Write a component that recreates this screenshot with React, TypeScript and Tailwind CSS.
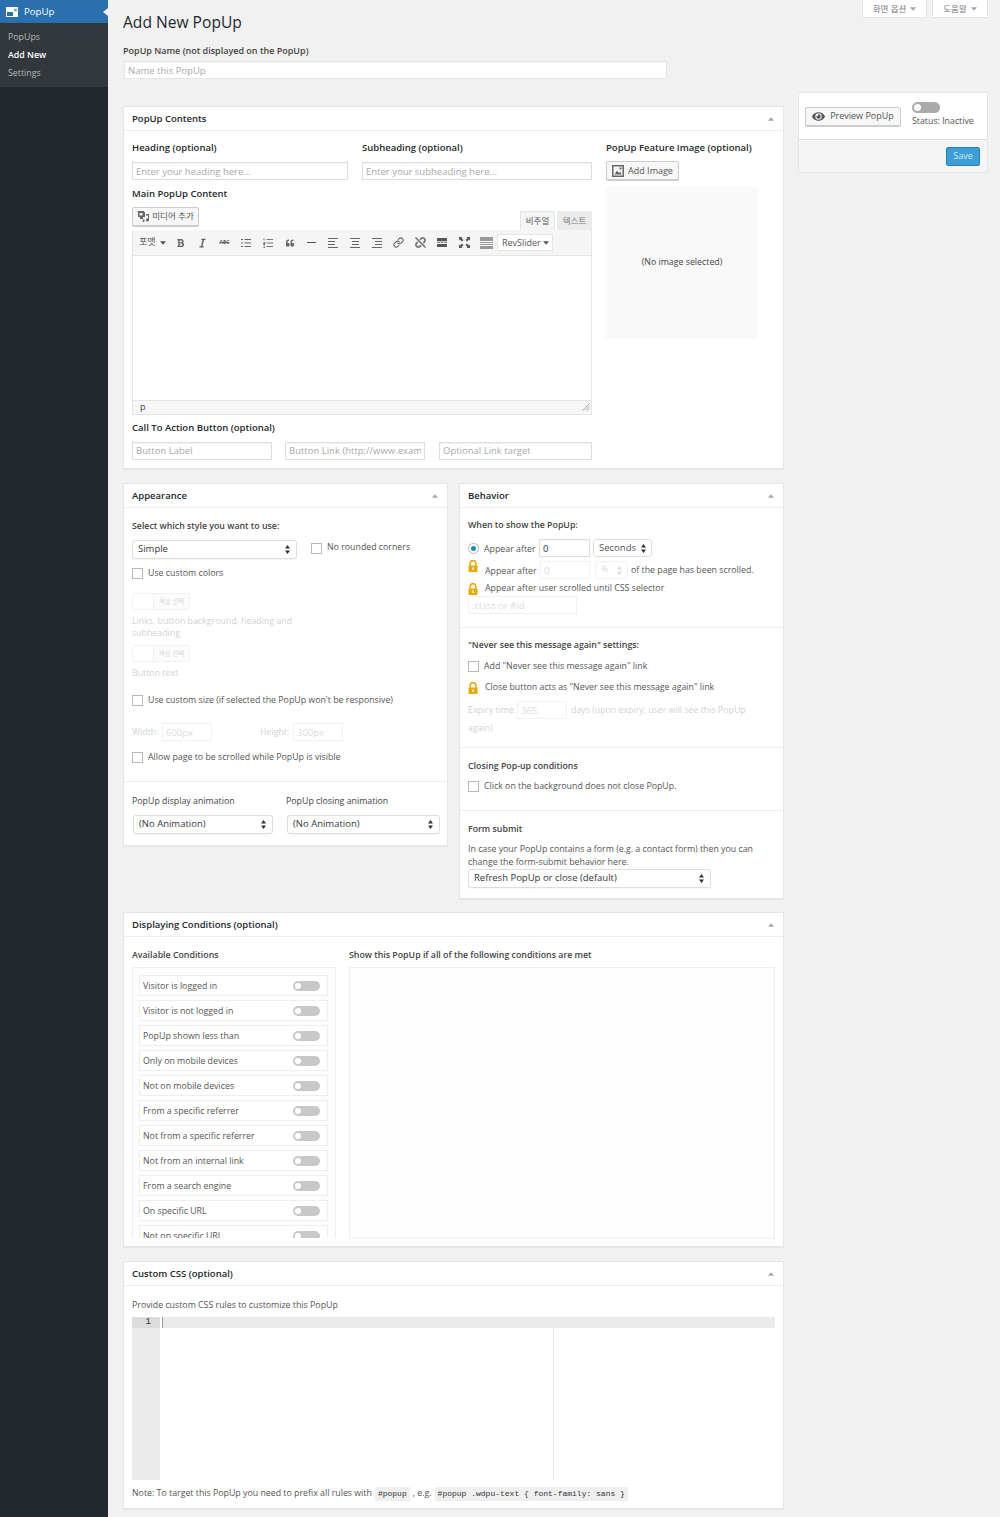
//App.tsx
import { ReactNode } from 'react';
import { FaBold, FaItalic, FaQuoteLeft, FaEye, FaUnlink } from 'react-icons/fa';
import { Link } from 'lucide-react';

const conditions = [
	'Visitor is logged in',
	'Visitor is not logged in',
	'PopUp shown less than',
	'Only on mobile devices',
	'Not on mobile devices',
	'From a specific referrer',
	'Not from a specific referrer',
	'Not from an internal link',
	'From a search engine',
	'On specific URL',
	'Not on specific URL',
];

// Small triangle used on the collapse handles and dropdowns
function Caret({ up = false, className = 'fill-[#72777c]' }: { up?: boolean; className?: string }) {
	return (
		<svg width="6" height="4" viewBox="0 0 7 4" className={className}>
			<path d={up ? 'M3.5 0L7 4H0z' : 'M0 0h7L3.5 4z'} />
		</svg>
	);
}

// Up and down arrows of a native select
function SelectArrows({ className = 'fill-[#333]' }: { className?: string }) {
	return (
		<svg width="5" height="9" viewBox="0 0 5 9" className={className}>
			<path d="M2.5 0L5 3.5H0zM2.5 9L0 5.5h5z" />
		</svg>
	);
}

function Panel({ title, className, children }: { title: string; className: string; children: ReactNode }) {
	return (
		<section className={`bg-white border border-[#e5e5e5] shadow-[0_1px_1px_rgba(0,0,0,0.04)] ${className}`}>
			<div className="h-[24px] px-[8px] flex items-center justify-between border-b border-[#eee]">
				<h2 className="pt-[1px] text-[9.5px] font-semibold text-[#23282d]">{title}</h2>
				<span className="mr-[1px]"><Caret up className="fill-[#a0a5aa]" /></span>
			</div>
			{children}
		</section>
	);
}

function TextInput({ placeholder, value, className }: { placeholder?: string; value?: string; className: string }) {
	return (
		<input
			readOnly
			placeholder={placeholder}
			value={value}
			className={`h-[18px] px-[3px] bg-white border border-[#ddd] text-[9.5px] text-[#32373c] placeholder:text-[#a9a9a9] outline-none shadow-[inset_0_1px_1px_rgba(0,0,0,0.04)] ${className}`}
		/>
	);
}

function FadedInput({ placeholder, className }: { placeholder: string; className: string }) {
	return (
		<input
			readOnly
			placeholder={placeholder}
			className={`h-[18px] px-[3px] bg-white border border-[#f1f1f1] text-[9.5px] placeholder:text-[#dcdcdc] outline-none ${className}`}
		/>
	);
}

function Select({ label, className }: { label: string; className: string }) {
	return (
		<div className={`h-[19px] pl-[5px] pr-[6px] flex items-center justify-between bg-white border border-[#ddd] rounded-[3px] text-[9.5px] text-[#32373c] shadow-[0_1px_1px_rgba(0,0,0,0.04)] ${className}`}>
			<span>{label}</span>
			<SelectArrows />
		</div>
	);
}

function Check({ label, className = '' }: { label: string; className?: string }) {
	return (
		<label className={`flex items-center text-[8.8px] text-[#555] ${className}`}>
			<span className="w-[11px] h-[11px] mr-[5px] bg-white border border-[#b4b9be] shrink-0"></span>
			{label}
		</label>
	);
}

function Lock() {
	return (
		<svg width="10" height="12" viewBox="0 0 10 12" className="shrink-0">
			<path d="M2.200 6V3.500a2.800 2.800 0 0 1 5.600 0V6" fill="none" stroke="#e6ab0a" strokeWidth="1.5" />
			<rect x="0.500" y="5.500" width="9" height="6.500" rx="0.500" fill="#e6ab0a" />
			<rect x="4.300" y="7.400" width="1.400" height="2.600" fill="#ffffff" />
		</svg>
	);
}

function ColorSwatch() {
	return (
		<div className="w-[58px] h-[17px] flex border border-[#f1f1f1] rounded-[2px] font-['Liberation_Sans','Noto_Sans_CJK_KR',sans-serif] text-[6.5px] text-[#d8d8d8]">
			<span className="w-[21px] border-r border-[#f1f1f1]"></span>
			<span className="flex-1 flex items-center justify-center bg-[#fcfcfc]">색상 선택</span>
		</div>
	);
}

function Toggle({ tone = 'bg-[#c8c8c8]', className = 'w-[27px] h-[10px]', knob = 'w-[6px] h-[6px]' }: { tone?: string; className?: string; knob?: string }) {
	return (
		<span className={`flex items-center pl-[2px] rounded-full ${tone} ${className}`}>
			<span className={`rounded-full bg-white ${knob}`}></span>
		</span>
	);
}

function AlignIcon({ kind }: { kind: 'left' | 'center' | 'right' }) {
	const short = kind === 'left' ? 'M0 3.500h7M0 6.500h7' : kind === 'center' ? 'M2 3.500h7M2 6.500h7' : 'M3 3.500h7M3 6.500h7';
	return (
		<svg width="10" height="10" viewBox="0 0 10 10" className="stroke-[#666]" strokeWidth="1" fill="none">
			<path d="M0 0.500h10M0 9.500h10" />
			<path d={short} />
		</svg>
	);
}

function BulletList() {
	return (
		<svg width="10" height="10" viewBox="0 0 10 10" className="stroke-[#666]" strokeWidth="1" fill="none">
			<path d="M0 1.500h2M3.500 1.500h6.500M0 5h2M3.500 5h6.500M0 8.500h2M3.500 8.500h6.500" />
		</svg>
	);
}

function NumberList() {
	return (
		<svg width="10" height="10" viewBox="0 0 10 10" className="stroke-[#777]" strokeWidth="1" fill="none">
			<path d="M1 0.500v2M0.500 4.500h1.500v1h-1.500v1h1.500M0.500 8h1.500M0.500 9.500h1.500M3.500 1.500h6.500M3.500 5h6.500M3.500 8.500h6.500" />
		</svg>
	);
}

function ToolButton({ children }: { children: ReactNode }) {
	return <span className="w-[21.8px] h-full flex items-center justify-center text-[#666] shrink-0">{children}</span>;
}

function Toolbar() {
	return (
		<div className="h-[26px] pt-[1px] flex items-center bg-[#f5f5f5] border-b border-[#e5e5e5]">
			<span className="w-[37px] pl-[6px] flex items-center justify-between pr-[4px] font-['Liberation_Sans','Noto_Sans_CJK_KR',sans-serif] text-[9px] text-[#555] shrink-0">
				포맷 <Caret className="fill-[#555]" />
			</span>
			<ToolButton><FaBold className="w-[7px] h-[10px]" /></ToolButton>
			<ToolButton><FaItalic className="w-[7px] h-[10px]" /></ToolButton>
			<ToolButton><span className="text-[5px] font-bold line-through">ABC</span></ToolButton>
			<ToolButton><BulletList /></ToolButton>
			<ToolButton><NumberList /></ToolButton>
			<ToolButton><FaQuoteLeft className="w-[10px] h-[8px]" /></ToolButton>
			<ToolButton><span className="w-[9px] h-[1px] bg-[#555]"></span></ToolButton>
			<ToolButton><AlignIcon kind="left" /></ToolButton>
			<ToolButton><AlignIcon kind="center" /></ToolButton>
			<ToolButton><AlignIcon kind="right" /></ToolButton>
			<ToolButton><Link size={11} strokeWidth={2.4} /></ToolButton>
			<ToolButton><FaUnlink className="w-[11px] h-[11px] text-[#777]" /></ToolButton>
			<ToolButton>
				<svg width="10" height="9" viewBox="0 0 11 10" className="fill-[#555]">
					<path d="M0 0h11v3.500H0zM0 4.600h3v1H0zM4 4.600h3v1H4zM8 4.600h3v1H8zM0 6.800h11V10H0z" />
				</svg>
			</ToolButton>
			<ToolButton>
				<svg width="11" height="11" viewBox="0 0 11 11" className="fill-[#555]">
					<path d="M0 0h3.500L2.500 1 4.500 3 3 4.500 1 2.500 0 3.500zM11 0v3.500L10 2.500 8 4.500 6.500 3 8.500 1 7.500 0zM0 11V7.500L1 8.500 3 6.500 4.500 8 2.500 10 3.500 11zM11 11H7.500L8.500 10 6.500 8 8 6.500 10 8.500 11 7.500z" />
				</svg>
			</ToolButton>
			<ToolButton>
				<svg width="13" height="12" viewBox="0 0 13 12" className="fill-[#999]">
					<path d="M0 0h13v4H0zM0 5h13v1H0zM0 7h13v1H0zM0 9h13v3H0z" />
				</svg>
			</ToolButton>
			<span className="w-[56px] h-[17px] pl-[4px] pr-[3px] flex items-center justify-between bg-white border border-[#e5e5e5] text-[9px] text-[#555]">
				RevSlider <Caret className="fill-[#555]" />
			</span>
		</div>
	);
}

function PopupContents() {
	return (
		<Panel title="PopUp Contents" className="h-[363px] mt-[27px]">
			<div className="pl-[8px] flex">
				<div className="w-[474px] shrink-0">
					<div className="flex gap-[14px] mt-[10px]">
						<div className="w-[216px]">
							<h3 className="h-[13px] leading-[13px] text-[9.5px] font-semibold text-[#23282d]">Heading (optional)</h3>
							<TextInput placeholder="Enter your heading here..." className="w-full mt-[8px]" />
						</div>
						<div className="w-[230px]">
							<h3 className="h-[13px] leading-[13px] text-[9.5px] font-semibold text-[#23282d]">Subheading (optional)</h3>
							<TextInput placeholder="Enter your subheading here..." className="w-full mt-[8px]" />
						</div>
					</div>
					<h3 className="mt-[6px] h-[13px] leading-[13px] text-[9.5px] font-semibold text-[#23282d]">Main PopUp Content</h3>
					<div className="w-[460px] mt-[7px] flex items-end justify-between">
						<button className="w-[67px] h-[19px] mb-[4px] flex items-center justify-center gap-[3px] bg-[#f7f7f7] border border-[#ccc] rounded-[2px] font-['Liberation_Sans','Noto_Sans_CJK_KR',sans-serif] text-[8.5px] text-[#555] shadow-[0_1px_0_#ccc]">
							<svg width="12" height="11" viewBox="0 0 12 11" className="fill-[#666]">
								<path d="M1 0h6v1h1v5H6v2H3V6H1V1H0zM2.500 2v2.500h3V2zM9 3h3v6a1.500 1.500 0 1 1-1-1.400V4.500H9zM5 8.500h2.500V10a1 1 0 1 1-1-1z" />
							</svg>
							미디어 추가
						</button>
						<div className="flex font-['Liberation_Sans','Noto_Sans_CJK_KR',sans-serif] text-[8.5px]">
							<span className="w-[35px] h-[19px] pt-[2px] flex items-center justify-center bg-[#f5f5f5] border border-b-0 border-[#e5e5e5] text-[#555]">비주얼</span>
							<span className="w-[35px] h-[19px] pt-[2px] ml-[2px] flex items-center justify-center bg-[#ebebeb] text-[#777]">텍스트</span>
						</div>
					</div>
					<div className="w-[460px] border border-[#e5e5e5] border-t-0">
						<Toolbar />
						<div className="h-[144px] bg-white"></div>
						<div className="h-[14px] pl-[7px] flex items-center justify-between bg-[#f7f7f7] border-t border-[#e5e5e5] text-[9px] text-[#444]">
							p
							<svg width="8" height="8" viewBox="0 0 8 8" className="stroke-[#aaa] mr-[1px]" fill="none">
								<path d="M7.500 0.500l-7 7M7.500 3l-4.500 4.500M7.500 5.500l-2 2" />
							</svg>
						</div>
					</div>
					<h3 className="mt-[6px] h-[13px] leading-[13px] text-[9.5px] font-semibold text-[#23282d]">Call To Action Button (optional)</h3>
					<div className="mt-[8px] w-[460px] flex gap-[13px]">
						<TextInput placeholder="Button Label" className="w-[140px]" />
						<TextInput placeholder="Button Link (http://www.example.com)" className="w-[140px]" />
						<TextInput placeholder="Optional Link target" className="flex-1 min-w-0 ml-[1px]" />
					</div>
				</div>
				<div className="w-[152px] mt-[10px]">
					<h3 className="h-[13px] leading-[13px] text-[9.5px] font-semibold text-[#23282d] whitespace-nowrap">PopUp Feature Image (optional)</h3>
					<button className="w-[73px] h-[19px] mt-[7px] flex items-center justify-center gap-[4px] bg-[#f7f7f7] border border-[#ccc] rounded-[2px] text-[9px] text-[#555] shadow-[0_1px_0_#ccc]">
						<svg width="12" height="12" viewBox="0 0 12 12" className="fill-[#666]">
							<path d="M0 0h12v12H0zM1.500 1.500v9h9v-9zM2.500 9.500l2.500-4 2 2.500 1.500-1.500 1 3zM7.500 2.500h2v2h-2z" fillRule="evenodd" />
						</svg>
						Add Image
					</button>
					<div className="h-[152px] mt-[7px] flex items-center justify-center bg-[#f9f9f9] text-[8.8px] text-[#444]">(No image selected)</div>
				</div>
			</div>
		</Panel>
	);
}

function Appearance() {
	return (
		<Panel title="Appearance" className="w-[325px] h-[363px]">
			<div className="px-[8px]">
				<h4 className="mt-[12px] h-[13px] leading-[13px] text-[8.8px] font-semibold text-[#444]">Select which style you want to use:</h4>
				<div className="mt-[7px] flex items-center">
					<Select label="Simple" className="w-[165px]" />
					<Check label="No rounded corners" className="ml-[14px] mb-[3px]" />
				</div>
				<Check label="Use custom colors" className="mt-[8px]" />
				<div className="mt-[13px]"><ColorSwatch /></div>
				<p className="w-[170px] mt-[5px] text-[8.8px] leading-[12px] text-[#d2d2d2]">Links, button background, heading and subheading</p>
				<div className="mt-[6px]"><ColorSwatch /></div>
				<p className="mt-[5px] text-[8.8px] leading-[12px] text-[#d2d2d2]">Button text</p>
				<Check label="Use custom size (if selected the PopUp won't be responsive)" className="mt-[15px]" />
				<div className="mt-[16px] flex items-center text-[8.8px] text-[#d2d2d2]">
					<span className="w-[30px]">Width:</span>
					<FadedInput placeholder="600px" className="w-[50px]" />
					<span className="ml-[48px] w-[33px]">Height:</span>
					<FadedInput placeholder="300px" className="w-[50px]" />
				</div>
				<Check label="Allow page to be scrolled while PopUp is visible" className="mt-[10px]" />
			</div>
			<div className="mt-[16px] border-t border-[#eee] px-[8px] flex">
				<div className="w-[154px] shrink-0">
					<p className="mt-[13px] h-[13px] leading-[13px] text-[8.8px] text-[#444]">PopUp display animation</p>
					<Select label="(No Animation)" className="w-[140px] mt-[7px] ml-[1px]" />
				</div>
				<div className="shrink-0">
					<p className="mt-[13px] h-[13px] leading-[13px] text-[8.8px] text-[#444]">PopUp closing animation</p>
					<Select label="(No Animation)" className="w-[153px] mt-[7px] ml-[1px]" />
				</div>
			</div>
		</Panel>
	);
}

function Behavior() {
	return (
		<Panel title="Behavior" className="w-[325px] h-[416px]">
			<div className="px-[8px] pt-[11px] h-[120px] border-b border-[#eee]">
				<h4 className="h-[13px] leading-[13px] text-[8.8px] font-semibold text-[#444]">When to show the PopUp:</h4>
				<div className="mt-[7px] flex items-center text-[8.8px] text-[#555]">
					<span className="w-[11px] h-[11px] mr-[5px] flex items-center justify-center rounded-full border border-[#b4b9be]">
						<span className="w-[5px] h-[5px] rounded-full bg-[#1e8cbe]"></span>
					</span>
					<span className="w-[55px] mt-[3px]">Appear after</span>
					<TextInput value="0" className="w-[51px] border-[#ccc]" />
					<span className="ml-[3px] w-[59px] h-[18px] px-[5px] flex items-center justify-between bg-white border border-[#ddd] rounded-[3px] text-[9.5px]">
						Seconds <SelectArrows />
					</span>
				</div>
				<div className="mt-[4px] flex items-center text-[8.8px] text-[#555]">
					<span className="w-[17px] h-[12px] -mt-[8px]"><Lock /></span>
					<span className="w-[55px] mt-[3px]">Appear after</span>
					<FadedInput placeholder="0" className="w-[50px]" />
					<span className="ml-[5px] w-[33px] h-[18px] px-[5px] flex items-center justify-between border border-[#f1f1f1] rounded-[3px] text-[#dcdcdc]">
						% <SelectArrows className="fill-[#dcdcdc]" />
					</span>
					<span className="ml-[3px] mt-[1px]">of the page has been scrolled.</span>
				</div>
				<div className="mt-[3px] h-[14px] flex items-center text-[8.8px] text-[#555]">
					<span className="w-[17px]"><Lock /></span>
					Appear after user scrolled until CSS selector
				</div>
				<FadedInput placeholder=".class or #id" className="block w-[109px]" />
			</div>
			<div className="px-[8px] pt-[11px] h-[120px] border-b border-[#eee]">
				<h4 className="h-[13px] leading-[13px] text-[8.8px] font-semibold text-[#444]">"Never see this message again" settings:</h4>
				<Check label='Add "Never see this message again" link' className="mt-[8px]" />
				<div className="mt-[8px] h-[13px] flex items-center text-[8.8px] text-[#555]">
					<span className="w-[17px]"><Lock /></span>
					Close button acts as "Never see this message again" link
				</div>
				<div className="mt-[7px] flex items-center text-[8.8px] text-[#d2d2d2]">
					<span className="w-[49px] mt-[1px]">Expiry time</span>
					<FadedInput placeholder="365" className="w-[50px]" />
					<span className="ml-[4px] mt-[1px]">days (upon expiry, user will see this PopUp</span>
				</div>
				<p className="mt-[3px] text-[8.8px] leading-[13px] text-[#d2d2d2]">again)</p>
			</div>
			<div className="px-[8px] pt-[12px] h-[63px] border-b border-[#eee]">
				<h4 className="h-[13px] leading-[13px] text-[8.8px] font-semibold text-[#444]">Closing Pop-up conditions</h4>
				<Check label="Click on the background does not close PopUp." className="mt-[7px]" />
			</div>
			<div className="px-[8px] pt-[12px]">
				<h4 className="h-[13px] leading-[13px] text-[8.8px] font-semibold text-[#444]">Form submit</h4>
				<p className="mt-[7px] text-[8.8px] leading-[13px] text-[#555]">In case your PopUp contains a form (e.g. a contact form) then you can change the form-submit behavior here.</p>
				<Select label="Refresh PopUp or close (default)" className="w-[243px] h-[18px]" />
			</div>
		</Panel>
	);
}

function DisplayConditions() {
	return (
		<Panel title="Displaying Conditions (optional)" className="h-[335px] mt-[13px]">
			<div className="px-[8px] flex gap-[13px]">
				<div className="w-[204px]">
					<h4 className="mt-[12px] h-[13px] leading-[13px] text-[8.8px] font-semibold text-[#444]">Available Conditions</h4>
					<div className="mt-[5px] h-[271px] overflow-hidden pl-[6px] pr-[7px] pt-[7px] border border-[#eee] border-b-0 bg-[#fdfdfd] flex flex-col gap-[4px]">
						{conditions.map((c) => (
							<div key={c} className="h-[21px] pl-[3px] pr-[7px] flex items-center justify-between bg-white border border-[#eee] text-[8.8px] text-[#555] shrink-0">
								<span className="pt-[2px]">{c}</span>
								<Toggle />
							</div>
						))}
					</div>
				</div>
				<div className="flex-1">
					<h4 className="mt-[12px] h-[13px] leading-[13px] text-[8.8px] font-semibold text-[#444]">Show this PopUp if all of the following conditions are met</h4>
					<div className="mt-[5px] h-[272px] border border-[#eee] bg-[#fdfdfd]"></div>
				</div>
			</div>
		</Panel>
	);
}

function CustomCss() {
	return (
		<Panel title="Custom CSS (optional)" className="h-[248px] mt-[14px]">
			<div className="px-[8px]">
				<p className="mt-[13px] h-[13px] leading-[13px] text-[8.8px] text-[#555]">Provide custom CSS rules to customize this PopUp</p>
				<div className="relative mt-[5px] h-[163px] flex">
					<div className="w-[28px] bg-[#ebebeb] font-['Liberation_Mono',monospace] text-[9px] leading-[11px] text-[#333]">
						<div className="h-[11px] pr-[9px] text-right bg-[#dcdcdc]">1</div>
					</div>
					<div className="flex-1">
						<div className="h-[11px] ml-[2px] bg-[#ebebeb] border-l border-[#999]"></div>
					</div>
					<span className="absolute left-[421px] top-0 bottom-0 w-px bg-[#ebebeb]"></span>
				</div>
				<p className="mt-[6px] h-[16px] flex items-center text-[8.8px] text-[#555]">
					Note: To target this PopUp you need to prefix all rules with
					<code className="mx-[3px] px-[3px] py-[1px] bg-[#efefef] font-['Liberation_Mono',monospace] text-[8px] text-[#333]">#popup</code>
					, e.g.
					<code className="ml-[3px] px-[3px] py-[1px] bg-[#efefef] font-['Liberation_Mono',monospace] text-[8px] text-[#333]">#popup .wdpu-text {'{'} font-family: sans {'}'}</code>
				</p>
			</div>
		</Panel>
	);
}

function Sidebar() {
	return (
		<aside className="w-[108px] min-h-[1517px] bg-[#23282d] shrink-0">
			<div className="relative h-[23px] pl-[6px] flex items-center gap-[6px] bg-[#2a6fae] text-[9.6px] text-white">
				<svg width="12" height="10" viewBox="0 0 12 10" className="fill-white">
					<path d="M0 0h12v10H0zM1 5v4h6V5zM8.500 1.500l1 1 1-1 .5.500-1 1 1 1-.5.500-1-1-1 1-.5-.5 1-1-1-1z" fillRule="evenodd" />
				</svg>
				<span className="pt-[1px]">PopUp</span>
				<span className="absolute right-0 top-[8px] w-0 h-0 border-y-[4px] border-y-transparent border-r-[5px] border-r-[#f1f1f1]"></span>
			</div>
			<nav className="h-[64px] pt-[6px] pb-[4px] bg-[#32373c] text-[8.8px] flex flex-col">
				<a className="h-[18px] pl-[8px] flex items-center text-[#b4b9be]">PopUps</a>
				<a className="h-[18px] pl-[8px] flex items-center font-semibold text-white">Add New</a>
				<a className="h-[18px] pl-[8px] flex items-center text-[#b4b9be]">Settings</a>
			</nav>
		</aside>
	);
}

export default function App() {
	return (
		<div className="flex min-h-[1517px] bg-[#f1f1f1] font-['Open_Sans',sans-serif]">
			<Sidebar />
			<main className="pl-[15px] flex items-start gap-[14px]">
				<div className="w-[661px]">
					<h1 className="mt-[11px] h-[22px] leading-[22px] text-[15.6px] text-[#23282d]">Add New PopUp</h1>
					<label className="block mt-[11px] h-[13px] leading-[13px] text-[9px] font-semibold text-[#444]">PopUp Name (not displayed on the PopUp)</label>
					<TextInput placeholder="Name this PopUp" className="block w-[543px] ml-[1px] mt-[4px] border-[#e5e5e5]" />
					<PopupContents />
					<div className="mt-[14px] flex items-start gap-[11px]">
						<Appearance />
						<Behavior />
					</div>
					<DisplayConditions />
					<CustomCss />
				</div>
				<div className="w-[190px]">
					<div className="flex justify-end gap-[5px]">
						<span className="w-[65px] h-[18px] pt-[1px] flex items-center justify-center gap-[4px] bg-white border border-[#e5e5e5] border-t-0 font-['Liberation_Sans','Noto_Sans_CJK_KR',sans-serif] text-[8.5px] text-[#72777c]">
							화면 옵션 <Caret className="fill-[#a0a5aa]" />
						</span>
						<span className="w-[56px] h-[18px] pt-[1px] flex items-center justify-center gap-[4px] bg-white border border-[#e5e5e5] border-t-0 font-['Liberation_Sans','Noto_Sans_CJK_KR',sans-serif] text-[8.5px] text-[#72777c]">
							도움말 <Caret className="fill-[#a0a5aa]" />
						</span>
					</div>
					<div className="mt-[74px] h-[81px] bg-white border border-[#e5e5e5]">
						<div className="h-[46px] px-[6px] flex items-center gap-[12px]">
							<button className="w-[96px] h-[19px] flex items-center justify-center gap-[5px] bg-[#f7f7f7] border border-[#ccc] rounded-[2px] text-[9px] text-[#555] shadow-[0_1px_0_#ccc]">
								<FaEye className="w-[13px] h-[13px] text-[#555]" /> Preview PopUp
							</button>
							<div className="mb-[1px] text-[8.8px] leading-[16px] text-[#555] -ml-[1px]">
								<Toggle tone="bg-[#aaaaaa]" className="w-[28px] h-[11px]" knob="w-[7px] h-[7px]" />
								<div className="whitespace-nowrap">Status: Inactive</div>
							</div>
						</div>
						<div className="h-[33px] pr-[7px] flex items-center justify-end bg-[#f5f5f5] border-t border-[#ddd]">
							<button className="w-[34px] h-[19px] flex items-center justify-center bg-[#3b9ed8] border border-[#2a83b8] rounded-[2px] text-[9px] text-[#cfe8f7]">Save</button>
						</div>
					</div>
				</div>
			</main>
		</div>
	);
}
